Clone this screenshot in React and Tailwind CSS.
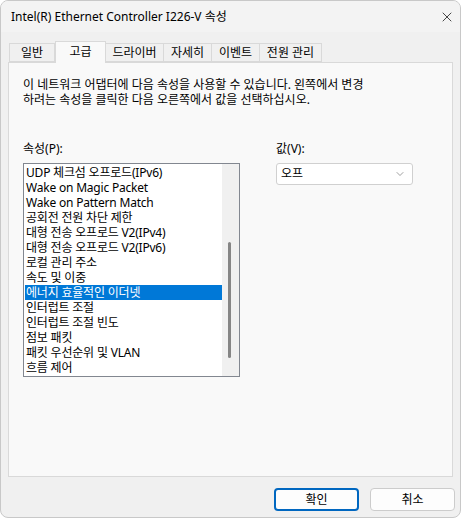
import { ChevronDown, X } from 'lucide-react';

const items = [
  'UDP 체크섬 오프로드(IPv6)',
  'Wake on Magic Packet',
  'Wake on Pattern Match',
  '공회전 전원 차단 제한',
  '대형 전송 오프로드 V2(IPv4)',
  '대형 전송 오프로드 V2(IPv6)',
  '로컬 관리 주소',
  '속도 및 이중',
  '에너지 효율적인 이더넷',
  '인터럽트 조절',
  '인터럽트 조절 빈도',
  '점보 패킷',
  '패킷 우선순위 및 VLAN',
  '흐름 제어',
];

const tabs = [
  { label: '일반', w: 'w-[46px]' },
  { label: '고급', w: 'w-[51px]', active: true },
  { label: '드라이버', w: 'w-[58px]' },
  { label: '자세히', w: 'w-[48px]' },
  { label: '이벤트', w: 'w-[48px]' },
  { label: '전원 관리', w: 'w-[62px]' },
];

export default function App() {
  return (
    <div
      className="w-[463px] h-[520px] bg-white text-[12px] text-black"
      style={{ fontFamily: '"Segoe UI", "Noto Sans", "Noto Sans CJK KR", sans-serif' }}
    >
      <div className="w-[461px] h-[518px] rounded-lg border border-[#c8c8c8] bg-[#f0f0f0] overflow-hidden flex flex-col">
        {/* title bar */}
        <div className="h-[31px] shrink-0 flex items-center justify-between pl-[10px] pr-[5px] bg-[#f3f3f3]">
          <span className="text-[12px] leading-none">Intel(R) Ethernet Controller I226-V 속성</span>
          <X size={16} strokeWidth={1.2} className="text-[#1a1a1a]" />
        </div>

        {/* tabs */}
        <div className="flex items-end h-[30px] pl-[8px] shrink-0">
          {tabs.map((t) =>
            t.active ? (
              <div
                key={t.label}
                className={`${t.w} h-[22px] -mb-px relative z-10 bg-[#f9f9f9] border border-b-0 border-[#d9d9d9] flex justify-center pt-[1px] leading-[17px]`}
              >
                {t.label}
              </div>
            ) : (
              <div
                key={t.label}
                className={`${t.w} h-[19px] bg-[#f0f0f0] border border-[#d9d9d9] border-l-0 first:border-l flex items-center justify-center leading-none`}
              >
                {t.label}
              </div>
            )
          )}
        </div>

        {/* panel */}
        <div className="mx-[7px] h-[415px] shrink-0 bg-[#f9f9f9] border border-[#d9d9d9] pl-[14px] pt-[14px]">
          <p className="leading-[15px]">
            이 네트워크 어댑터에 다음 속성을 사용할 수 있습니다. 왼쪽에서 변경
            <br />
            하려는 속성을 클릭한 다음 오른쪽에서 값을 선택하십시오.
          </p>

          <div className="flex mt-[34px]">
            <div className="w-[217px]">
              <div className="leading-[15px] mb-[7px]">속성(P):</div>
              <div className="h-[214px] bg-white border border-[#828790] flex">
                <div className="flex-1 pt-[1px] pl-[1px]">
                  {items.map((it, i) => (
                    <div
                      key={it}
                      className={`h-[15px] leading-[15px] pl-[1px] whitespace-nowrap overflow-hidden tracking-[-0.2px] ${
                        i === 8 ? 'bg-[#0078d7] text-white' : ''
                      }`}
                    >
                      {it}
                    </div>
                  ))}
                </div>
                <div className="w-[17px] bg-[#f0f0f0] relative">
                  <div className="absolute left-[6px] top-[78px] w-[3px] h-[116px] rounded-full bg-[#858585]" />
                </div>
              </div>
            </div>

            <div className="ml-[36px] w-[137px]">
              <div className="leading-[15px] mb-[7px]">값(V):</div>
              <div className="h-[22px] bg-white border border-[#d0d0d0] rounded-[3px] flex items-center justify-between pl-[4px] pr-[6px]">
                <span>오프</span>
                <ChevronDown size={12} strokeWidth={1.2} className="text-[#606060]" />
              </div>
            </div>
          </div>
        </div>

        {/* buttons */}
        <div className="flex justify-end gap-[11px] pr-[5px] mt-[11px]">
          <button className="w-[85px] h-[23px] rounded-[4px] border-2 border-[#0067c0] bg-[#fdfdfd] leading-none">
            확인
          </button>
          <button className="w-[85px] h-[23px] rounded-[4px] border border-[#cccccc] bg-[#fdfdfd] leading-none">
            취소
          </button>
        </div>
      </div>
    </div>
  );
}
